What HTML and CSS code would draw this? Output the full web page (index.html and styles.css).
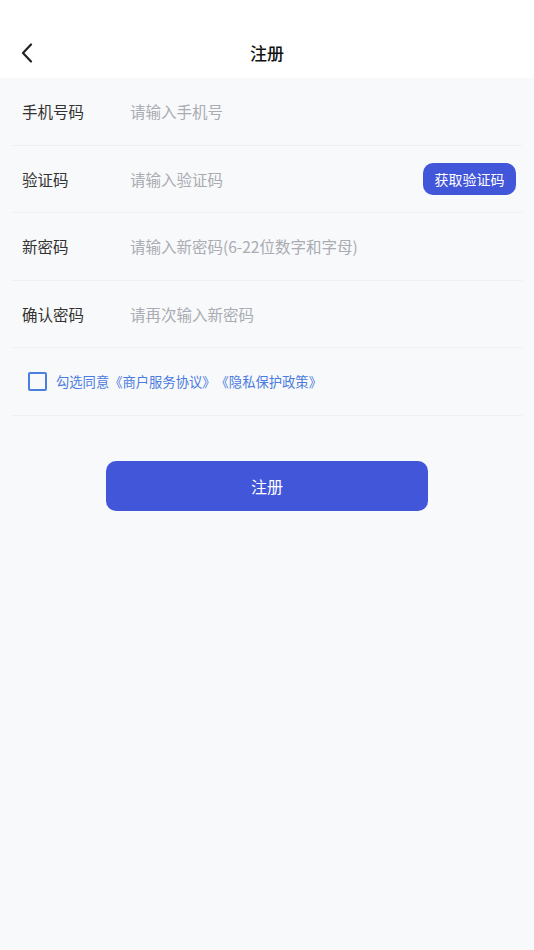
FILE: index.html
```html
<!DOCTYPE html>
<html lang="zh-CN">
<head>
  <meta charset="UTF-8">
  <meta name="viewport" content="width=device-width, initial-scale=1.0">
  <title>注册</title>
  <link rel="stylesheet" href="styles.css">
</head>
<body>
  <header class="top">
    <div class="navbar">
      <span class="back">
        <svg width="14" height="20" viewBox="0 0 14 20"><path d="M11 1.5 L3 10 L11 18.5" fill="none" stroke="#222" stroke-width="2.2" stroke-linecap="round" stroke-linejoin="round"/></svg>
      </span>
      <h1 class="title">注册</h1>
    </div>
  </header>

  <main class="page">
    <!-- 表单 -->
    <div class="form">
      <div class="row">
        <span class="label">手机号码</span>
        <span class="input">请输入手机号</span>
      </div>
      <div class="row">
        <span class="label">验证码</span>
        <span class="input">请输入验证码</span>
        <button class="code-btn">获取验证码</button>
      </div>
      <div class="row">
        <span class="label">新密码</span>
        <span class="input">请输入新密码(6-22位数字和字母)</span>
      </div>
      <div class="row">
        <span class="label">确认密码</span>
        <span class="input">请再次输入新密码</span>
      </div>
      <div class="row agree">
        <span class="checkbox"></span>
        <span class="agree-text">勾选同意《商户服务协议》《隐私保护政策》</span>
      </div>
    </div>

    <button class="submit">注册</button>
  </main>
</body>
</html>
```

FILE: styles.css
```css
body {
  margin: 0;
  font-family: "Noto Sans CJK SC", "Noto Sans", sans-serif;
  background-color: #f8f9fa;
  height: 950px;
}

.top {
  background-color: #fff;
  padding-top: 30px;
}

.navbar {
  height: 48px;
  display: flex;
  align-items: center;
  justify-content: center;
  position: relative;
}

.back {
  position: absolute;
  left: 20px;
  top: 13px;
  display: flex;
}

.title {
  margin: 0 0 4px;
  font-size: 17px;
  font-weight: 500;
  color: #111;
}

.form {
  padding: 0 12px;
}

.row {
  height: 67.5px;
  box-sizing: border-box;
  border-bottom: 1px solid #eff0f2;
  display: flex;
  align-items: center;
  padding: 0 6px 0 10px;
}

.label {
  width: 108px;
  font-size: 15.5px;
  color: #333;
}

.input {
  flex: 1;
  font-size: 15.5px;
  color: #a9acb3;
}

.code-btn {
  border: none;
  background-color: #4256d9;
  color: #fff;
  font-family: inherit;
  font-size: 14px;
  height: 32px;
  width: 93px;
  padding: 0;
  border-radius: 10px;
}

.agree {
  padding-left: 16px;
}

.checkbox {
  width: 15px;
  height: 15px;
  border: 2px solid #4a7fe0;
  border-radius: 2px;
  margin-right: 9px;
}

.agree-text {
  font-size: 13.3px;
  color: #4a7be0;
  text-spacing-trim: space-all;
}

.submit {
  display: block;
  margin: 45px auto 0;
  width: 322px;
  height: 50px;
  border: none;
  border-radius: 10px;
  background-color: #4256d9;
  color: #fff;
  font-family: inherit;
  font-size: 16px;
}
```
